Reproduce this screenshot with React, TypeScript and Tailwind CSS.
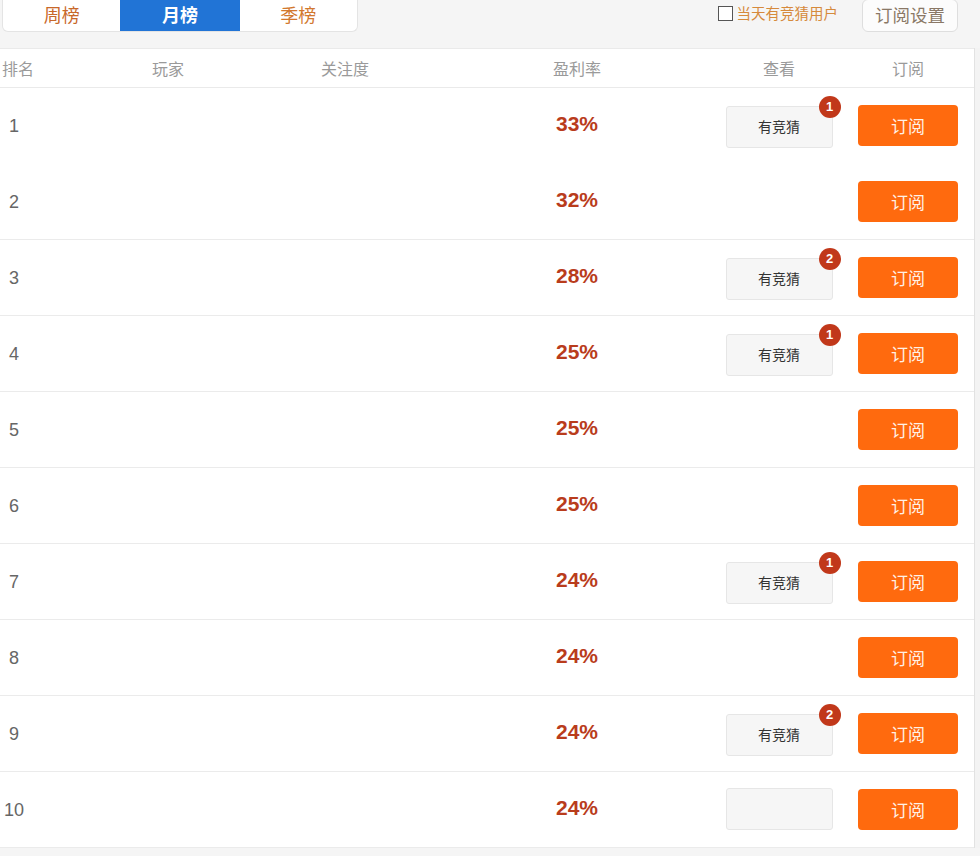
import React from "react";

type Row = { rank: number; rate: string; badge?: number; blank?: boolean };

const rows: Row[] = [
  { rank: 1, rate: "33%", badge: 1 },
  { rank: 2, rate: "32%" },
  { rank: 3, rate: "28%", badge: 2 },
  { rank: 4, rate: "25%", badge: 1 },
  { rank: 5, rate: "25%" },
  { rank: 6, rate: "25%" },
  { rank: 7, rate: "24%", badge: 1 },
  { rank: 8, rate: "24%" },
  { rank: 9, rate: "24%", badge: 2 },
  { rank: 10, rate: "24%", blank: true },
];

const cjk = "font-['Noto_Sans_CJK_SC','Noto_Sans',sans-serif]";
const cols = "grid grid-cols-[36px_254px_110px_80px_194px_26px_158px_100px_1fr] items-center";

export default function App() {
  return (
    <div className={`w-[980px] h-[856px] overflow-hidden bg-[#f5f5f5] ${cjk}`}>
      {/* top bar */}
      <div className="h-[48px] flex items-start justify-between pl-[2px] pr-[22px]">
        <div className="flex w-[356px] h-[32px] bg-white border border-t-0 border-[#e4e4e4] rounded-b-md overflow-hidden">
          <button type="button" className="w-[118px] h-[31px] text-[18px] leading-[26px] pb-[4px] text-[#c8682a]">
            周榜
          </button>
          <button type="button" className="w-[120px] h-[31px] text-[18px] leading-[26px] pb-[4px] font-bold text-white bg-[#2174d6]">
            月榜
          </button>
          <button type="button" className="w-[118px] h-[31px] text-[18px] leading-[26px] pb-[4px] text-[#d2782e]">
            季榜
          </button>
        </div>
        <div className="flex items-start">
          <label className="flex items-center mt-[4px] mr-[24px]">
            <span className="w-[15px] h-[15px] border border-[#555] bg-white mr-[4px]" />
            <span className="text-[14.5px] leading-[18px] text-[#d68a3c]">当天有竞猜用户</span>
          </label>
          <button
            type="button"
            className="w-[96px] h-[33px] -mt-px bg-[#fcfcfc] border border-[#dedede] rounded-md text-[17.5px] text-[#8a7866]"
          >
            订阅设置
          </button>
        </div>
      </div>

      {/* table */}
      <div className="flex">
        <div className="w-[975px] bg-white border-r border-[#e2e2e2]">
          <div className={`${cols} h-[40px] border-y border-[#eaeaea] text-[16px] text-[#9a9a9a]`}>
            <div className="pl-[2px]">排名</div>
            <div className="text-center pl-[10px]">玩家</div>
            <div className="text-center">关注度</div>
            <div />
            <div className="text-center">盈利率</div>
            <div />
            <div className="text-center">查看</div>
            <div className="text-center">订阅</div>
            <div />
          </div>

          {rows.map((r, i) => (
            <div
              key={r.rank}
              className={`${cols} h-[76px] border-b ${i === 0 ? "border-transparent" : "border-[#ebebeb]"}`}
            >
              <div className="text-center text-[18px] text-[#666] font-['Liberation_Sans',sans-serif] pt-[2px] pr-[8px]">
                {r.rank}
              </div>
              <div />
              <div />
              <div />
              <div className="text-center text-[21px] font-bold text-[#b93c1c] font-['Liberation_Sans',sans-serif] -mt-[4px]">
                {r.rate}
              </div>
              <div />
              <div className="flex justify-center">
                {(r.badge || r.blank) && (
                  <div className="relative mt-[2px]">
                    <button
                      type="button"
                      className="w-[107px] h-[42px] bg-[#f6f6f6] border border-[#e6e6e6] rounded-[3px] text-[14px] text-[#333]"
                    >
                      {r.blank ? "" : "有竞猜"}
                    </button>
                    {r.badge && (
                      <span className="absolute -top-[10px] -right-[8px] w-[22px] h-[22px] rounded-full bg-[#c1381a] text-white text-[13px] font-bold flex items-center justify-center font-['Liberation_Sans',sans-serif]">
                        {r.badge}
                      </span>
                    )}
                  </div>
                )}
              </div>
              <div className="flex justify-center">
                <button
                  type="button"
                  className="w-[100px] h-[41px] rounded-[4px] bg-[#ff6a0e] text-[17px] text-[#fff1e6]"
                >
                  订阅
                </button>
              </div>
              <div />
            </div>
          ))}
        </div>
        <div className="flex-1 bg-[#f3f3f3]" />
      </div>
    </div>
  );
}
